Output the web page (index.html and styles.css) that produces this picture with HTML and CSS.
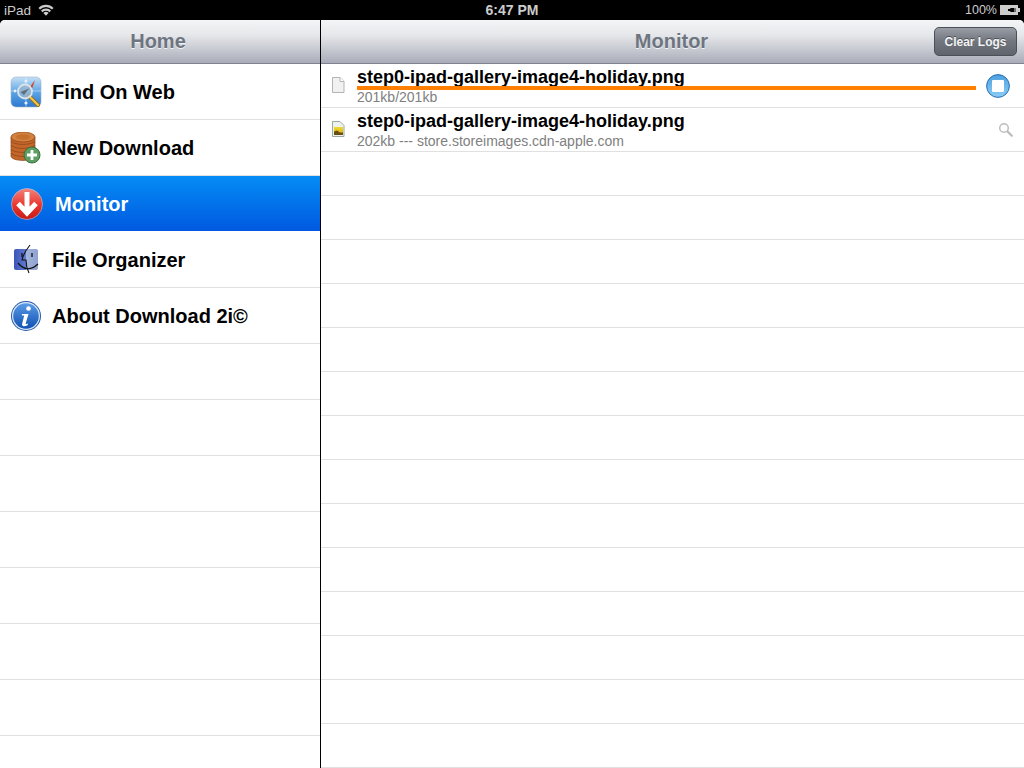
FILE: index.html
```html
<!DOCTYPE html>
<html lang="en">

<head>
    <meta charset="UTF-8">
    <title>Download 2i</title>
    <link rel="stylesheet" href="styles.css">
</head>

<body>

    <div class="status-bar">
        <div class="status-left">
            <span>iPad</span>
            <svg class="wifi" width="16" height="12" viewBox="0 0 16 12">
                <path d="M0.5 4 A10.5 10.5 0 0 1 15.5 4 L14 5.6 A8.4 8.4 0 0 0 2 5.6 Z" fill="#ccc" />
                <path d="M3 6.6 A7 7 0 0 1 13 6.6 L11.5 8.2 A5 5 0 0 0 4.5 8.2 Z" fill="#ccc" />
                <path d="M5.4 9 A3.6 3.6 0 0 1 10.6 9 L8 11.8 Z" fill="#ccc" />
            </svg>
        </div>
        <div class="status-time">6:47 PM</div>
        <div class="status-right">
            <span>100%</span>
            <svg class="battery" width="20" height="10" viewBox="0 0 20 10">
                <rect x="0" y="0" width="18" height="10" fill="#ccc" />
                <rect x="18" y="3" width="2" height="4" fill="#ccc" />
                <path d="M4 5 H8 L11 3 H14 V7 H11 L8 5" fill="#000" />
                <path d="M8 4 H11 V6 H8 Z" fill="#000" />
                <rect x="14" y="3.6" width="2" height="0.9" fill="#000" />
                <rect x="14" y="5.6" width="2" height="0.9" fill="#000" />
            </svg>
        </div>
    </div>

    <div class="app">
        <div class="sidebar">
            <div class="nav-bar">
                <span></span>
                <h1>Home</h1>
                <span></span>
            </div>
            <div class="menu">
                <div class="menu-row">
                    <svg class="menu-icon" width="32" height="32" viewBox="0 0 32 32">
                        <defs>
                            <linearGradient id="webBg" x1="0" y1="0" x2="0" y2="1">
                                <stop offset="0" stop-color="#c6e0f6" />
                                <stop offset="0.5" stop-color="#5da6e6" />
                                <stop offset="1" stop-color="#2d78d0" />
                            </linearGradient>
                        </defs>
                        <rect x="1" y="1" width="30" height="30" rx="5" fill="url(#webBg)" stroke="#9fb4c8" stroke-width="0.6" />
                        <path d="M1 15 H31 M16 1 V31" stroke="#dcebf8" stroke-width="0.8" opacity="0.7" />
                        <circle cx="16" cy="5" r="1.6" fill="#e6f1fb" />
                        <circle cx="5" cy="15" r="1.4" fill="#e6f1fb" />
                        <circle cx="16" cy="27" r="1.6" fill="#e6f1fb" />
                        <path d="M20 11 L25 4 L22 13 Z" fill="#d8442e" />
                        <path d="M19 20 L28 29" stroke="#8a6a2a" stroke-width="4" stroke-linecap="round" />
                        <path d="M19 20 L28 29" stroke="#f4c542" stroke-width="2.4" stroke-linecap="round" />
                        <circle cx="15" cy="15.5" r="7" fill="#9bb6cc" fill-opacity="0.75" stroke="#d9e3ea" stroke-width="1.8" />
                        <path d="M10.5 16 L19 12.5 L14 19 Z" fill="#5c6f80" />
                    </svg>
                    <span>Find On Web</span>
                </div>
                <div class="menu-row">
                    <svg class="menu-icon" width="32" height="32" viewBox="0 0 32 32">
                        <g fill="#c4662a" stroke="#8a4415" stroke-width="0.7">
                            <path d="M1 21 V24 C1 26.6 6 28.4 13 28.4 C20 28.4 25 26.6 25 24 V21 Z" />
                            <path d="M1 17 V20 C1 22.6 6 24.4 13 24.4 C20 24.4 25 22.6 25 20 V17 Z" />
                            <path d="M1 13 V16 C1 18.6 6 20.4 13 20.4 C20 20.4 25 18.6 25 16 V13 Z" />
                            <path d="M1 9 V12 C1 14.6 6 16.4 13 16.4 C20 16.4 25 14.6 25 12 V9 Z" />
                            <path d="M1 5 V8 C1 10.6 6 12.4 13 12.4 C20 12.4 25 10.6 25 8 V5 Z" />
                        </g>
                        <ellipse cx="13" cy="5" rx="12" ry="5" fill="#d4803e" stroke="#8a4415" stroke-width="0.7" />
                        <ellipse cx="13" cy="5" rx="7" ry="2.8" fill="#c4702f" />
                        <circle cx="22" cy="23" r="8" fill="#5f9e62" stroke="#3c6e40" stroke-width="1" />
                        <path d="M22 18 V28 M17 23 H27" stroke="#fff" stroke-width="2.8" />
                    </svg>
                    <span>New Download</span>
                </div>
                <div class="menu-row selected">
                    <svg class="menu-icon" width="32" height="32" viewBox="0 0 32 32">
                        <defs>
                            <linearGradient id="downBg" x1="0" y1="0" x2="0" y2="1">
                                <stop offset="0" stop-color="#f4827c" />
                                <stop offset="0.55" stop-color="#e8342c" />
                                <stop offset="1" stop-color="#c81a16" />
                            </linearGradient>
                        </defs>
                        <circle cx="16" cy="16" r="15.5" fill="url(#downBg)" stroke="#a8d0f4" stroke-width="0.6" />
                        <path d="M16 4 V24 M7 15.5 L16 25 L25 15.5" fill="none" stroke="#fff" stroke-width="5" />
                    </svg>
                    <span>Monitor</span>
                </div>
                <div class="menu-row">
                    <svg class="menu-icon" width="32" height="32" viewBox="0 0 32 32">
                        <defs>
                            <linearGradient id="finderBg" x1="0" y1="0" x2="1" y2="0">
                                <stop offset="0" stop-color="#3c55b8" />
                                <stop offset="0.5" stop-color="#5f7ad0" />
                                <stop offset="0.51" stop-color="#a3b4dc" />
                                <stop offset="1" stop-color="#8fa2d0" />
                            </linearGradient>
                        </defs>
                        <rect x="4" y="5" width="24" height="21" rx="2" fill="url(#finderBg)" />
                        <path d="M20 1 C16 6 13 11 12 16 H16 C16 21 17 25 19 29" fill="none" stroke="#111" stroke-width="1.1" />
                        <path d="M8 19 Q17 30 28 20" fill="none" stroke="#111" stroke-width="1.2" />
                        <path d="M12 9 V13 M22 9 V13" stroke="#111" stroke-width="1.3" />
                    </svg>
                    <span>File Organizer</span>
                </div>
                <div class="menu-row">
                    <svg class="menu-icon" width="32" height="32" viewBox="0 0 32 32">
                        <defs>
                            <linearGradient id="infoBg" x1="0" y1="0" x2="0" y2="1">
                                <stop offset="0" stop-color="#5c9ce8" />
                                <stop offset="1" stop-color="#0e4fb0" />
                            </linearGradient>
                        </defs>
                        <circle cx="16" cy="16" r="15" fill="#2458a8" />
                        <circle cx="16" cy="16" r="13.4" fill="url(#infoBg)" stroke="#dbe8f8" stroke-width="1.2" />
                        <circle cx="18.5" cy="8.5" r="2.3" fill="#fff" />
                        <path d="M12 14 H18.5 L15.8 23 C15.5 24 16 24.5 18 23.6 L17.6 25.2 C14 27 11.4 26.4 12.2 23.4 L14.2 15.6 L11.8 15.4 Z" fill="#fff" />
                    </svg>
                    <span>About Download 2i©</span>
                </div>
                <div class="menu-row"></div>
                <div class="menu-row"></div>
                <div class="menu-row"></div>
                <div class="menu-row"></div>
                <div class="menu-row"></div>
                <div class="menu-row"></div>
                <div class="menu-row"></div>
                <div class="menu-row"></div>
            </div>
        </div>

        <div class="monitor">
            <div class="nav-bar">
                <span></span>
                <h1>Monitor</h1>
                <button class="clear-btn">Clear Logs</button>
            </div>
            <div class="log-list">
                <div class="log-row">
                    <svg class="file-icon" width="14" height="16" viewBox="0 0 14 16">
                        <path d="M1.5 0.5 H9 L13 4.5 V15.5 H1.5 Z" fill="#f1f1f1" stroke="#b4b4b4" />
                        <path d="M9 0.5 V4.5 H13" fill="#fff" stroke="#b4b4b4" />
                    </svg>
                    <div class="log-text">
                        <div class="log-name">step0-ipad-gallery-image4-holiday.png</div>
                        <div class="log-info">201kb/201kb</div>
                    </div>
                    <div class="progress"></div>
                    <svg class="stop-icon" width="24" height="24" viewBox="0 0 24 24">
                        <defs>
                            <linearGradient id="stopBg" x1="0" y1="0" x2="0" y2="1">
                                <stop offset="0" stop-color="#4da0e0" />
                                <stop offset="1" stop-color="#8ccdf4" />
                            </linearGradient>
                        </defs>
                        <circle cx="12" cy="12" r="11.4" fill="url(#stopBg)" stroke="#2a6cb4" stroke-width="1" />
                        <rect x="6" y="6" width="12" height="12" rx="1" fill="#fff" />
                    </svg>
                </div>
                <div class="log-row">
                    <svg class="file-icon" width="14" height="16" viewBox="0 0 14 16">
                        <defs>
                            <linearGradient id="pngBg" x1="0" y1="0" x2="0" y2="1">
                                <stop offset="0" stop-color="#f0dc30" />
                                <stop offset="1" stop-color="#d8a818" />
                            </linearGradient>
                        </defs>
                        <path d="M1.5 0.5 H9 L13 4.5 V15.5 H1.5 Z" fill="#eef2ee" stroke="#9aa8a0" />
                        <rect x="3" y="6" width="9" height="8" fill="url(#pngBg)" />
                        <path d="M3 10.5 L6 9.5 L9 11.5 H12 V14 H3 Z" fill="#6a5010" />
                    </svg>
                    <div class="log-text">
                        <div class="log-name">step0-ipad-gallery-image4-holiday.png</div>
                        <div class="log-info">202kb --- store.storeimages.cdn-apple.com</div>
                    </div>
                    <svg class="search-icon" width="15" height="15" viewBox="0 0 15 15">
                        <circle cx="6" cy="6" r="4.3" fill="none" stroke="#bdbdbd" stroke-width="1.5" />
                        <path d="M9.4 9.4 L13.8 13.8" stroke="#bdbdbd" stroke-width="2.2" stroke-linecap="round" />
                    </svg>
                </div>
                <div class="log-row"></div>
                <div class="log-row"></div>
                <div class="log-row"></div>
                <div class="log-row"></div>
                <div class="log-row"></div>
                <div class="log-row"></div>
                <div class="log-row"></div>
                <div class="log-row"></div>
                <div class="log-row"></div>
                <div class="log-row"></div>
                <div class="log-row"></div>
                <div class="log-row"></div>
                <div class="log-row"></div>
                <div class="log-row"></div>
            </div>
        </div>
    </div>

</body>

</html>
```

FILE: styles.css
```css
* {
    box-sizing: border-box;
}

html,
body {
    height: 100%;
}

body {
    margin: 0;
    background-color: #000;
    font-family: "Liberation Sans", Arial, sans-serif;
    overflow: hidden;
}

.status-bar {
    height: 20px;
    display: grid;
    grid-template-columns: 1fr auto 1fr;
    align-items: center;
    padding: 0 4px;
    color: #ccc;
    font-size: 13px;
}

.status-left {
    display: flex;
    align-items: center;
    gap: 7px;
    font-size: 13.5px;
}

.status-time {
    font-size: 14px;
    font-weight: bold;
}

.status-right {
    display: flex;
    justify-content: flex-end;
    align-items: center;
    gap: 3px;
    font-size: 12.5px;
}

.app {
    height: 748px;
    display: flex;
    background-color: #fff;
    border-radius: 5px 5px 0 0;
    overflow: hidden;
}

.sidebar {
    width: 320px;
    flex-shrink: 0;
}

.monitor {
    flex: 1;
    border-left: 1px solid #000;
}

.nav-bar {
    height: 44px;
    display: grid;
    grid-template-columns: 1fr auto 1fr;
    align-items: center;
    background: linear-gradient(#f4f5f7, #e6e7ea 35%, #a9adb9);
    border-bottom: 1px solid #7f8390;
}

.nav-bar h1 {
    margin: 0 2px 0 0;
    font-size: 20px;
    color: #6d7580;
    text-shadow: 0 1px 0 #f2f3f5;
}

.sidebar .nav-bar h1 {
    margin-right: 4px;
}

.clear-btn {
    justify-self: end;
    width: 83px;
    height: 29px;
    margin-right: 7px;
    padding: 0;
    border: 1px solid #4b4f57;
    border-radius: 5px;
    background: linear-gradient(#999da5, #70757e 50%, #5f646d);
    color: #f4f4f4;
    font-family: inherit;
    font-size: 12px;
    font-weight: bold;
    text-shadow: 0 -1px 0 #4b4f57;
}

.menu-row {
    height: 56px;
    display: flex;
    align-items: center;
    gap: 10px;
    padding-left: 10px;
    border-bottom: 1px solid #e0e0e0;
    font-size: 20px;
    font-weight: bold;
    color: #000;
}

.menu-row span {
    margin-top: 2px;
}

.menu-row.selected {
    gap: 12px;
    padding-left: 11px;
    background: linear-gradient(#058cf5, #0059e0) no-repeat;
    background-size: 100% 55px;
    border-bottom: 1px solid #fff;
    color: #fff;
}

.menu-icon {
    flex-shrink: 0;
}

.log-row {
    position: relative;
    height: 44px;
    display: flex;
    align-items: center;
    padding-left: 10px;
    border-bottom: 1px solid #e0e0e0;
}

.file-icon {
    flex-shrink: 0;
    margin-right: 12px;
    margin-top: -1px;
}

.log-text {
    flex: 1;
    align-self: flex-start;
    margin-top: 3px;
}

.log-name {
    font-size: 18px;
    line-height: 20px;
    font-weight: bold;
    color: #000;
}

.log-info {
    margin-top: 2px;
    font-size: 14px;
    line-height: 16px;
    color: #808080;
}

.progress {
    position: absolute;
    left: 36px;
    right: 48px;
    top: 22px;
    height: 4px;
    background-color: #ff7f00;
}

.stop-icon {
    flex-shrink: 0;
    margin-right: 14px;
}

.search-icon {
    flex-shrink: 0;
    margin-right: 11px;
}
```
